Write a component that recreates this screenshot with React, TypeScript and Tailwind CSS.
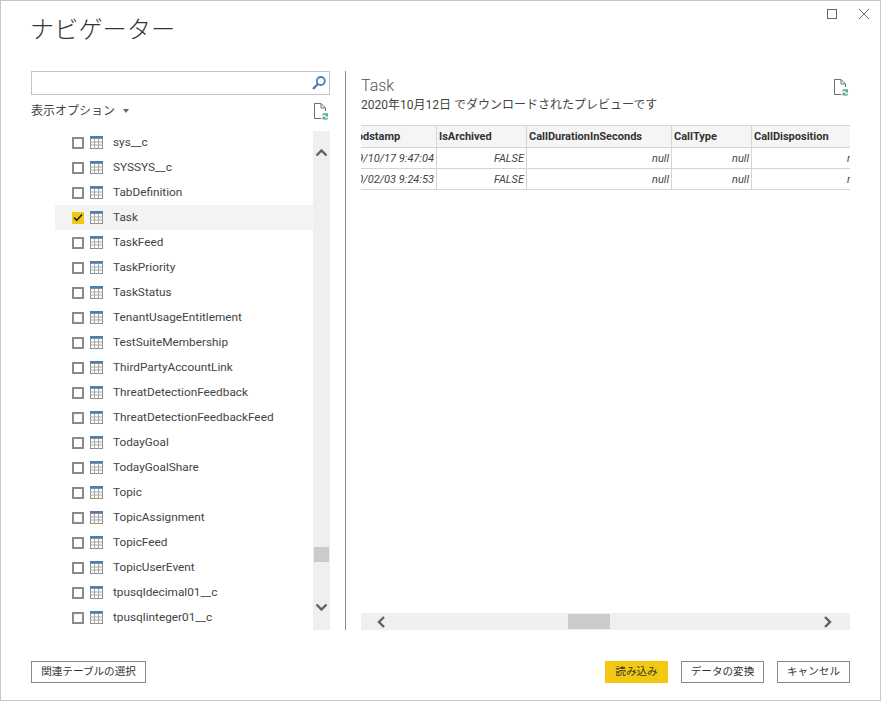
import React from 'react';

const font = 'font-["Roboto","Noto_Sans_CJK_JP",sans-serif]';

const tables = [
  'sys__c', 'SYSSYS__c', 'TabDefinition', 'Task', 'TaskFeed', 'TaskPriority', 'TaskStatus',
  'TenantUsageEntitlement', 'TestSuiteMembership', 'ThirdPartyAccountLink', 'ThreatDetectionFeedback',
  'ThreatDetectionFeedbackFeed', 'TodayGoal', 'TodayGoalShare', 'Topic', 'TopicAssignment',
  'TopicFeed', 'TopicUserEvent', 'tpusqldecimal01__c', 'tpusqlinteger01__c',
];

const columns = [
  { name: 'SystemModstamp', width: 'w-[135px]', pad: 'pl-[8px]' },
  { name: 'IsArchived', width: 'w-[90px]', pad: 'pl-[2px]' },
  { name: 'CallDurationInSeconds', width: 'w-[145px]', pad: 'pl-[2px]' },
  { name: 'CallType', width: 'w-[80px]', pad: 'pl-[2px]' },
  { name: 'CallDisposition', width: 'w-[115px]', pad: 'pl-[2px]' },
];

const rows = [
  ['2019/10/17 9:47:04', 'FALSE', 'null', 'null', 'null'],
  ['2020/02/03 9:24:53', 'FALSE', 'null', 'null', 'null'],
];

const TableIcon = () => (
  <svg width="13" height="13" viewBox="0 0 13 13" className="shrink-0">
    <rect x="0" y="0" width="13" height="3" fill="#4a7fb5" />
    <rect x="0.5" y="2.5" width="12" height="10" fill="#fff" stroke="#8c8c8c" />
    <path d="M0 6h13M0 9h13M4.500 3v10M8.500 3v10" stroke="#a6a6a6" strokeWidth="1" fill="none" />
  </svg>
);

const RefreshFileIcon = () => (
  <svg width="16" height="17" viewBox="0 0 16 17">
    <path d="M8.500 15.500H1.500V.5H8L12.500 5V8M8 .5V5H12.500" fill="none" stroke="#707070" strokeWidth="1" />
    <path d="M9 12.500a3 3 0 0 1 5-1.800l1-1V13.500h-3.500l1.200-1.200a1.600 1.600 0 0 0-2.500.2z" fill="#5fa98c" />
    <path d="M15.500 14.500a3 3 0 0 1-5 1.500l-1 .8V13.800h3.400l-1.200 1.200a1.600 1.600 0 0 0 2.600-.5z" fill="#5fa98c" />
  </svg>
);

const Chevron = ({ dir }: { dir: 'up' | 'down' | 'left' | 'right' }) => {
  const d = {
    up: 'M1.500 8.500L6.500 3.500l5 5',
    down: 'M1.500 3.500l5 5 5-5',
    left: 'M8 1L3 6l5 5',
    right: 'M3 1l5 5-5 5',
  }[dir];
  return (
    <svg width="13" height="12" viewBox="0 0 13 12">
      <path d={d} fill="none" stroke="#606060" strokeWidth="2.400" />
    </svg>
  );
};

const Row = ({ name }: { name: string }) => {
  const checked = name === 'Task';
  return (
    <div className={`flex h-[25px] items-center pl-[17px] ${checked ? 'bg-[#f3f3f3]' : ''}`}>
      {checked ? (
        <span className="flex h-[12px] w-[12px] items-center justify-center bg-[#f2c811]">
          <svg width="10" height="9" viewBox="0 0 10 9">
            <path d="M1 4.500L3.700 7.300 9 1.500" fill="none" stroke="#222" strokeWidth="1.600" />
          </svg>
        </span>
      ) : (
        <span className="h-[12px] w-[12px] border-2 border-[#8a8a8a] bg-white" />
      )}
      <span className="ml-[6px]"><TableIcon /></span>
      <span className="ml-[10px] mt-px text-[11.8px] leading-none text-[#444]">{name}</span>
    </div>
  );
};

const OutlineButton = ({ label, width }: { label: string; width: string }) => (
  <button className={`h-[22px] ${width} border border-[#8a8a8a] bg-white text-[10.6px] leading-none text-[#333]`}>
    {label}
  </button>
);

export default function App() {
  return (
    <div className={`flex h-[701px] w-[881px] flex-col overflow-hidden border border-[#c6c6c6] bg-white ${font}`}>
      <div className="flex h-[70px] justify-between pl-[29px] pr-[11px]">
        <h1 className="mt-[11px] text-[24.2px] font-light leading-[36px] text-[#333]">ナビゲーター</h1>
        <div className="mt-[8px] flex gap-[22px]">
          <span className="h-[10px] w-[10px] border border-[#666]" />
          <svg width="10" height="10" viewBox="0 0 10 10">
            <path d="M0 0l10 10M10 0L0 10" stroke="#666" strokeWidth="1" />
          </svg>
        </div>
      </div>

      <div className="flex h-[559px] pl-[30px]">
        <div className="flex w-[299px] flex-col">
          <div className="flex h-[24px] items-center justify-end border border-[#c4c4c4] pr-[2px]">
            <svg width="16" height="16" viewBox="0 0 16 16">
              <circle cx="9.800" cy="6" r="4" fill="none" stroke="#4a7fb5" strokeWidth="1.800" />
              <path d="M6.800 9L2 14" stroke="#4a7fb5" strokeWidth="2.400" />
            </svg>
          </div>
          <div className="flex h-[35px] items-center justify-between pb-[3px] pr-[1px]">
            <div className="flex items-center">
              <span className="text-[12px] leading-none text-[#444]">表示オプション</span>
              <svg width="6" height="4" viewBox="0 0 6 4" className="ml-[8px]">
                <path d="M0 0h6L3 4z" fill="#666" />
              </svg>
            </div>
            <RefreshFileIcon />
          </div>
          <div className="flex h-[500px] pl-[24px]">
            <div className="flex-1 overflow-hidden">
              {tables.map(t => <Row key={t} name={t} />)}
            </div>
            <div className="mt-px flex w-[17px] flex-col items-center bg-[#efefef]">
              <span className="mt-[16px] flex"><Chevron dir="up" /></span>
              <span className="mt-[388px] h-[15px] w-[15px] bg-[#cbcbcb]" />
              <span className="mt-[39px] flex"><Chevron dir="down" /></span>
            </div>
          </div>
        </div>

        <div className="ml-[15px] w-px bg-[#8a8a8a]" />

        <div className="ml-[15px] flex w-[489px] flex-col">
          <div className="flex h-[54px] justify-between">
            <div>
              <div className="mt-[4px] text-[16px] font-light leading-[21px] text-[#555]">Task</div>
              <div className="text-[12px] leading-[18px] text-[#444]">2020年10月12日 でダウンロードされたプレビューです</div>
            </div>
            <span className="mt-[8px] mr-[1px]"><RefreshFileIcon /></span>
          </div>
          <div className="flex-1 overflow-hidden">
            <div className="ml-[-59px] w-[570px] text-[11px] leading-none">
              <div className="flex h-[23px] border-y border-[#d4d4d4] bg-[#f5f5f5] font-bold text-[#333]">
                {columns.map(c => (
                  <div key={c.name} className={`${c.width} ${c.pad} flex shrink-0 items-center justify-start overflow-hidden whitespace-nowrap border-r border-[#d4d4d4]`}>
                    {c.name}
                  </div>
                ))}
              </div>
              {rows.map(r => (
                <div key={r[0]} className="flex h-[21px] border-b border-[#d4d4d4] italic text-[#444]">
                  {r.map((v, i) => (
                    <div key={i} className={`${columns[i].width} flex shrink-0 items-center justify-end whitespace-nowrap border-r border-[#d4d4d4] pr-[2px]`}>
                      {v}
                    </div>
                  ))}
                </div>
              ))}
            </div>
          </div>
          <div className="flex h-[17px] items-center bg-[#efefef] pl-[15px] pr-[15px]">
            <Chevron dir="left" />
            <span className="ml-[179px] h-[15px] w-[42px] bg-[#cbcbcb]" />
            <span className="ml-auto flex"><Chevron dir="right" /></span>
          </div>
        </div>
      </div>

      <div className="flex justify-between pl-[30px] pr-[30px] pt-[31px]">
        <OutlineButton label="関連テーブルの選択" width="w-[115px]" />
        <div className="flex gap-[13px]">
          <button className="h-[22px] w-[63px] bg-[#f2c811] text-[10.6px] leading-none text-[#333]">読み込み</button>
          <OutlineButton label="データの変換" width="w-[83px]" />
          <OutlineButton label="キャンセル" width="w-[73px]" />
        </div>
      </div>
    </div>
  );
}
